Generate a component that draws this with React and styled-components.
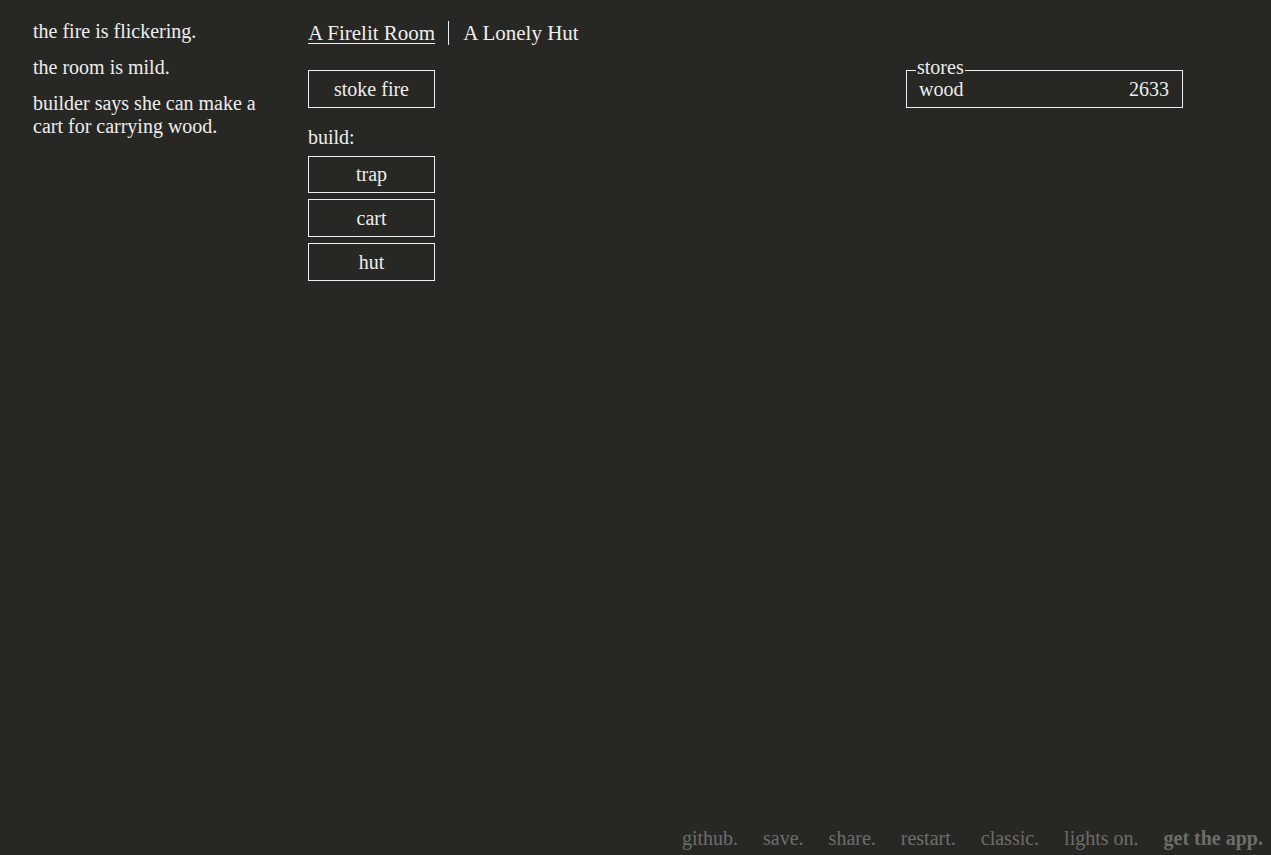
import React from 'react';
import styled, { createGlobalStyle } from 'styled-components';

const GlobalStyle = createGlobalStyle`
  html, body {
    margin: 0;
    padding: 0;
    background-color: #272823;
    color: #eeeeee;
    font-family: "Liberation Serif", "Times New Roman", serif;
    font-size: 20px;
  }
`;

const Page = styled.div`
  position: relative;
  height: 855px;
  display: flex;
  padding: 20px 0 0 33px;
  box-sizing: border-box;
`;

const Notifications = styled.div`
  width: 275px;
  display: flex;
  flex-direction: column;
  gap: 13px;
`;

const Note = styled.div`
  width: 232px;
  line-height: 23px;
`;

const Main = styled.div`
  width: 598px;
  display: flex;
  flex-direction: column;
`;

const Header = styled.div`
  display: flex;
  align-items: center;
  height: 26px;
  font-size: 21px;
`;

const Tab = styled.span`
  text-decoration: ${p => (p.$active ? 'underline' : 'none')};
  text-underline-offset: 3px;
  text-decoration-thickness: 1px;
  padding-right: ${p => (p.$first ? '13px' : '0')};
  padding-left: ${p => (p.$first ? '0' : '14px')};
  border-right: ${p => (p.$first ? '1px solid #eeeeee' : 'none')};
  line-height: 24px;
  cursor: pointer;
`;

const Button = styled.div`
  width: 125px;
  height: ${p => (p.$tall ? '36px' : '35px')};
  border: 1px solid #eeeeee;
  display: flex;
  align-items: center;
  justify-content: center;
  cursor: pointer;
`;

const Actions = styled.div`
  margin-top: 24px;
  display: flex;
  flex-direction: column;
`;

const BuildLabel = styled.div`
  margin-top: 18px;
  margin-bottom: 8px;
  line-height: 22px;
`;

const BuildList = styled.div`
  display: flex;
  flex-direction: column;
  gap: 6px;
`;

const Stores = styled.div`
  margin-top: 50px;
  width: 277px;
  height: 38px;
  box-sizing: border-box;
  border: 1px solid #eeeeee;
  padding: 0 13px 0 12px;
  align-self: flex-start;
  position: relative;
  display: flex;
  align-items: center;
`;

const Legend = styled.span`
  position: absolute;
  top: -14px;
  left: 9px;
  padding: 0 1px;
  line-height: 20px;
  background-color: #272823;
`;

const StoreRow = styled.div`
  flex: 1;
  display: flex;
  justify-content: space-between;
  line-height: 22px;
`;

const Footer = styled.div`
  position: absolute;
  right: 8px;
  bottom: 5px;
  display: flex;
  gap: 25px;
  color: #6d6d6a;
`;

const FooterLink = styled.span`
  font-weight: ${p => (p.$bold ? 'bold' : 'normal')};
  cursor: pointer;
`;

export default function App() {
  return (
    <>
      <GlobalStyle />
      <Page>
        <Notifications>
          <Note>the fire is flickering.</Note>
          <Note>the room is mild.</Note>
          <Note>builder says she can make a cart for carrying wood.</Note>
        </Notifications>
        <Main>
          <Header>
            <Tab $active $first>A Firelit Room</Tab>
            <Tab>A Lonely Hut</Tab>
          </Header>
          <Actions>
            <Button $tall>stoke fire</Button>
            <BuildLabel>build:</BuildLabel>
            <BuildList>
              <Button>trap</Button>
              <Button $tall>cart</Button>
              <Button $tall>hut</Button>
            </BuildList>
          </Actions>
        </Main>
        <Stores>
          <Legend>stores</Legend>
          <StoreRow>
            <span>wood</span>
            <span>2633</span>
          </StoreRow>
        </Stores>
        <Footer>
          <FooterLink>github.</FooterLink>
          <FooterLink>save.</FooterLink>
          <FooterLink>share.</FooterLink>
          <FooterLink>restart.</FooterLink>
          <FooterLink>classic.</FooterLink>
          <FooterLink>lights on.</FooterLink>
          <FooterLink $bold>get the app.</FooterLink>
        </Footer>
      </Page>
    </>
  );
}
